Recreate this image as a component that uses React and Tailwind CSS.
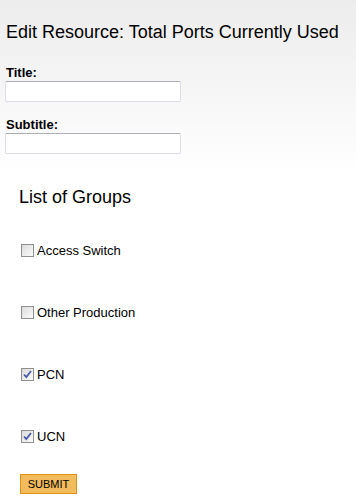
import React from 'react';

const Box = ({ checked }) => (
  <span className="relative inline-block w-[13px] h-[13px] border border-[#8e8f8f] bg-gradient-to-br from-[#dcdcdc] to-[#fbfbfb] shrink-0">
    {checked && (
      <svg className="absolute left-[1px] top-[1px]" width="9" height="9" viewBox="0 0 9 9">
        <path d="M1 4.5 L3.3 7 L8 1" fill="none" stroke="#4a5aa6" strokeWidth="1.8" />
      </svg>
    )}
  </span>
);

const groups = [
  { name: 'Access Switch', checked: false },
  { name: 'Other Production', checked: false },
  { name: 'PCN', checked: true },
  { name: 'UCN', checked: true },
];

const App = () => {
  return (
    <div className="w-[356px] h-[504px] overflow-hidden bg-gradient-to-b from-[#ececec] via-white via-[35%] to-white font-['Liberation_Sans',Arial,sans-serif] text-black">
      <h1 className="pt-[22px] pl-[6px] text-[18px] leading-[20px]">Edit Resource: Total Ports Currently Used</h1>

      <div className="mt-[24px] pl-[5px]">
        <label className="block pl-[1px] text-[13px] leading-[14px] font-bold">Title:</label>
        <input type="text" className="block mt-[1px] w-[176px] h-[21px] bg-white border border-[#dcdde6] border-t-[#abadb3] rounded-[2px]" />
        <label className="block mt-[16px] pl-[1px] text-[13px] leading-[14px] font-bold">Subtitle:</label>
        <input type="text" className="block mt-[1px] w-[176px] h-[21px] bg-white border border-[#dcdde6] border-t-[#abadb3] rounded-[2px]" />
      </div>

      <h2 className="mt-[33px] pl-[19px] text-[18px] leading-[20px]">List of Groups</h2>

      <div className="mt-[36px] pl-[21px] flex flex-col gap-[47px]">
        {groups.map((g) => (
          <div key={g.name} className="flex items-center gap-[3px] h-[15px]">
            <Box checked={g.checked} />
            <span className="text-[13px] leading-[15px]">{g.name}</span>
          </div>
        ))}
      </div>

      <button className="mt-[30px] ml-[20px] w-[57px] h-[20px] bg-[#f2bb5c] border border-[#e38f1c] text-[11px] leading-[18px] text-black">
        SUBMIT
      </button>
    </div>
  );
};

export default App;
